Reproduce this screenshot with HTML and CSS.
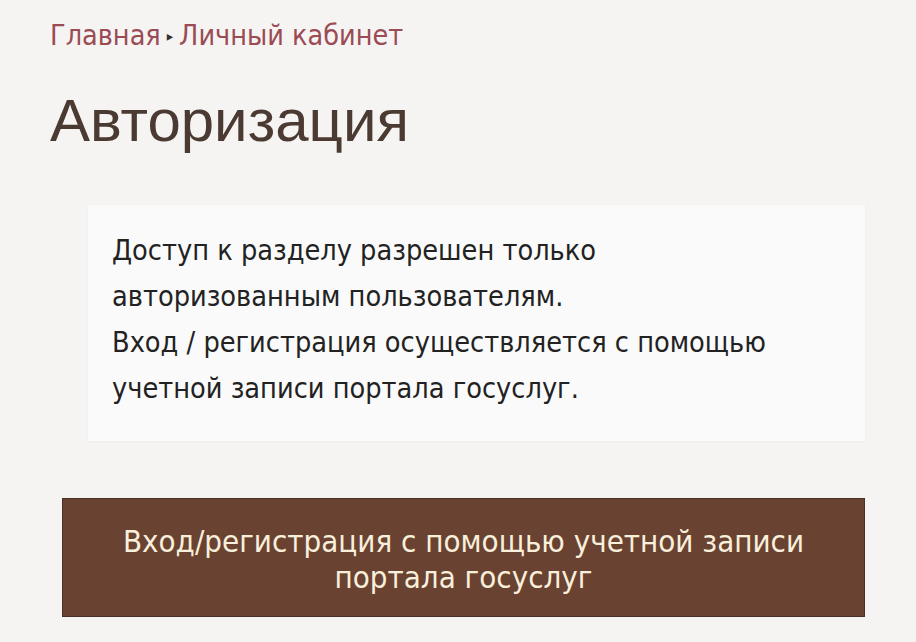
FILE: index.html
```html
<!DOCTYPE html>
<html lang="ru">
<head>
<meta charset="utf-8">
<title>Авторизация</title>
<link rel="stylesheet" href="styles.css">
</head>
<body>
<div class="page">
  <nav class="crumbs">
    <a class="crumb" href="#">Главная</a>
    <span class="sep">&#9656;</span>
    <a class="crumb" href="#">Личный кабинет</a>
  </nav>
  <h1 class="title">Авторизация</h1>
  <div class="card">
    <p class="msg">Доступ к разделу разрешен только<br>авторизованным пользователям.<br>Вход / регистрация осуществляется с помощью<br>учетной записи портала госуслуг.</p>
  </div>
  <a class="btn" href="#">Вход/регистрация с помощью учетной записи<br>портала госуслуг</a>
</div>
</body>
</html>
```
FILE: styles.css
```css
html, body {
  margin: 0;
  padding: 0;
  background: #f6f4f3;
}
.page {
  width: 916px;
  height: 642px;
  box-sizing: border-box;
  padding: 18px 51px 0 50px;
  font-family: "Liberation Sans Narrow", "DejaVu Sans Condensed", sans-serif;
}
.crumbs {
  display: flex;
  align-items: center;
  gap: 6px;
  font-size: 28.5px;
  line-height: 36px;
}
.crumb {
  color: #9a4b53;
  text-decoration: none;
}
.sep {
  font-size: 14px;
  color: #333;
}
.title {
  margin: 32px 0 0 0;
  font-family: "Liberation Sans", Arial, sans-serif;
  font-weight: normal;
  font-size: 60px;
  line-height: 70px;
  color: #4a3a31;
}
.card {
  margin: 49px 0 0 38px;
  background: #fafafa;
  box-shadow: 0 1px 2px rgba(0,0,0,0.04);
  padding: 22px 24px 30px 24px;
}
.msg {
  margin: 0;
  font-size: 28.6px;
  line-height: 46px;
  color: #222;
}
.btn {
  display: block;
  margin: 57px 0 0 12px;
  background: #6a4231;
  border: 1px solid #4a3126;
  color: #f8efdc;
  text-align: center;
  text-decoration: none;
  font-size: 31px;
  line-height: 36px;
  padding: 24px 0 21px;
}
```
